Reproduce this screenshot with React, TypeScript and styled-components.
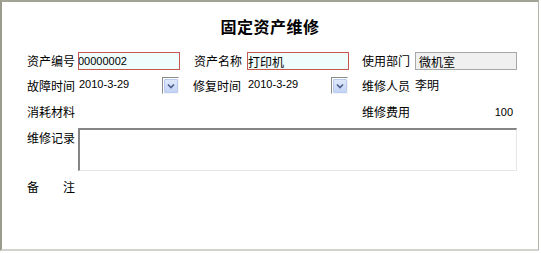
import React from 'react';
import styled, { createGlobalStyle } from "styled-components";

const GlobalStyle = createGlobalStyle`
  html, body {
    margin: 0;
    padding: 0;
    background: #ffffff;
  }
  body {
    font-family: "Noto Sans CJK SC", "Liberation Sans", sans-serif;
    font-size: 12px;
    color: #000;
  }
`;

const Frame = styled.div`
  box-sizing: border-box;
  width: 539px;
  height: 251px;
  border-left: 2px solid #9c9c8e;
  border-top: 2px solid #a4a496;
  border-right: 1px solid #b4b4aa;
  border-bottom: 2px solid #d2d2ce;
  background: #fff;
`;

const Title = styled.h1`
  margin: 0;
  padding-top: 13px;
  height: 37px;
  box-sizing: border-box;
  text-align: center;
  font-size: 16px;
  line-height: 22px;
  font-weight: 700;
  letter-spacing: 0.5px;
`;

const FormGrid = styled.div`
  display: grid;
  grid-template-columns: 51px 116px 53px 115px 53px 102px;
  grid-template-rows: 18px 18px 18px 43px 18px;
  row-gap: 7px;
  padding-left: 25px;
  padding-top: 13px;

  & > :nth-child(n + 13) {
    margin-top: 1px;
  }
`;

const Label = styled.div<{ $top?: boolean; $shift?: number }>`
  display: flex;
  align-items: ${p => (p.$top ? 'flex-start' : 'center')};
  padding-top: ${p => (p.$top ? '3px' : '0')};
  margin-left: ${p => p.$shift ?? 0}px;
  font-size: 12px;
  line-height: 14px;
  white-space: nowrap;
`;

const Spaced = styled(Label)`
  justify-content: space-between;
  width: 48px;
`;

const Input = styled.div<{ $tone: 'edit' | 'readonly' }>`
  box-sizing: border-box;
  width: 102px;
  height: 18px;
  display: flex;
  align-items: center;
  overflow: hidden;
  white-space: nowrap;
  font-size: 12px;
  border: 1px solid ${p => (p.$tone === 'edit' ? '#c4574f' : '#a8a8a8')};
  background: ${p => (p.$tone === 'edit' ? '#f0fdfd' : '#f0f0f0')};
  padding-left: ${p => (p.$tone === 'edit' ? '0' : '3px')};
`;

const Digits = styled.span`
  font-family: "Liberation Sans", Arial, sans-serif;
  font-size: 11px;
  margin-left: -1px;
`;

const DateField = styled.div`
  width: 102px;
  height: 18px;
  display: flex;
  justify-content: space-between;
  align-items: flex-start;
`;

const DateText = styled.span`
  font-family: "Liberation Sans", Arial, sans-serif;
  font-size: 11px;
  line-height: 12px;
  padding-left: 1px;
  padding-top: 1px;
`;

const DropButton = styled.div`
  box-sizing: border-box;
  width: 17px;
  height: 17px;
  margin-right: 1px;
  border-left: 1px solid #8a8a8a;
  border-top: 1px solid #8a8a8a;
  border-right: 1px solid #f4f4f4;
  border-bottom: 1px solid #f4f4f4;
  display: flex;
  align-items: center;
  justify-content: center;
  background: #fff;
`;

const DropFace = styled.div`
  width: 12px;
  height: 12px;
  border: 1px solid #b9c9ef;
  background: linear-gradient(#dfe8fb, #c3d3f5);
  display: flex;
  align-items: center;
  justify-content: center;
  border-radius: 1px;
`;

const PlainValue = styled.div`
  font-size: 12px;
  line-height: 14px;
  padding-top: 0;
  margin-top: -3px;
`;

const Amount = styled.div`
  font-family: "Liberation Sans", Arial, sans-serif;
  font-size: 11px;
  display: flex;
  align-items: center;
  justify-content: flex-end;
  padding-right: 4px;
  margin-top: -2px;
`;

const Memo = styled.div`
  grid-column: 2 / 7;
  box-sizing: border-box;
  width: 439px;
  height: 43px;
  border-left: 2px solid #858585;
  border-top: 2px solid #858585;
  border-right: 1px solid #e6e6e6;
  border-bottom: 1px solid #e6e6e6;
  background: #fff;
`;

const DatePicker = ({ value }: { value: string }) => (
    <DateField>
        <DateText>{value}</DateText>
        <DropButton>
            <DropFace>
                <svg width="8" height="6" viewBox="0 0 8 6">
                    <path d="M1 1.5 L4 4.5 L7 1.5" fill="none" stroke="#4a5f8c" strokeWidth="1.6" />
                </svg>
            </DropFace>
        </DropButton>
    </DateField>
);

const App = () => {
    return (
        <>
            <GlobalStyle />
            <Frame>
                <Title>固定资产维修</Title>
                <FormGrid>
                    <Label>资产编号</Label>
                    <div><Input $tone="edit"><Digits>00000002</Digits></Input></div>
                    <Label>资产名称</Label>
                    <div><Input $tone="edit">打印机</Input></div>
                    <Label>使用部门</Label>
                    <div><Input $tone="readonly">微机室</Input></div>

                    <Label>故障时间</Label>
                    <DatePicker value="2010-3-29" />
                    <Label $shift={-1}>修复时间</Label>
                    <DatePicker value="2010-3-29" />
                    <Label>维修人员</Label>
                    <Label><PlainValue>李明</PlainValue></Label>

                    <Label>消耗材料</Label>
                    <div />
                    <div />
                    <div />
                    <Label>维修费用</Label>
                    <Amount>100</Amount>

                    <Label $top>维修记录</Label>
                    <Memo />

                    <Spaced><span>备</span><span>注</span></Spaced>
                </FormGrid>
            </Frame>
        </>
    );
};

export default App;
